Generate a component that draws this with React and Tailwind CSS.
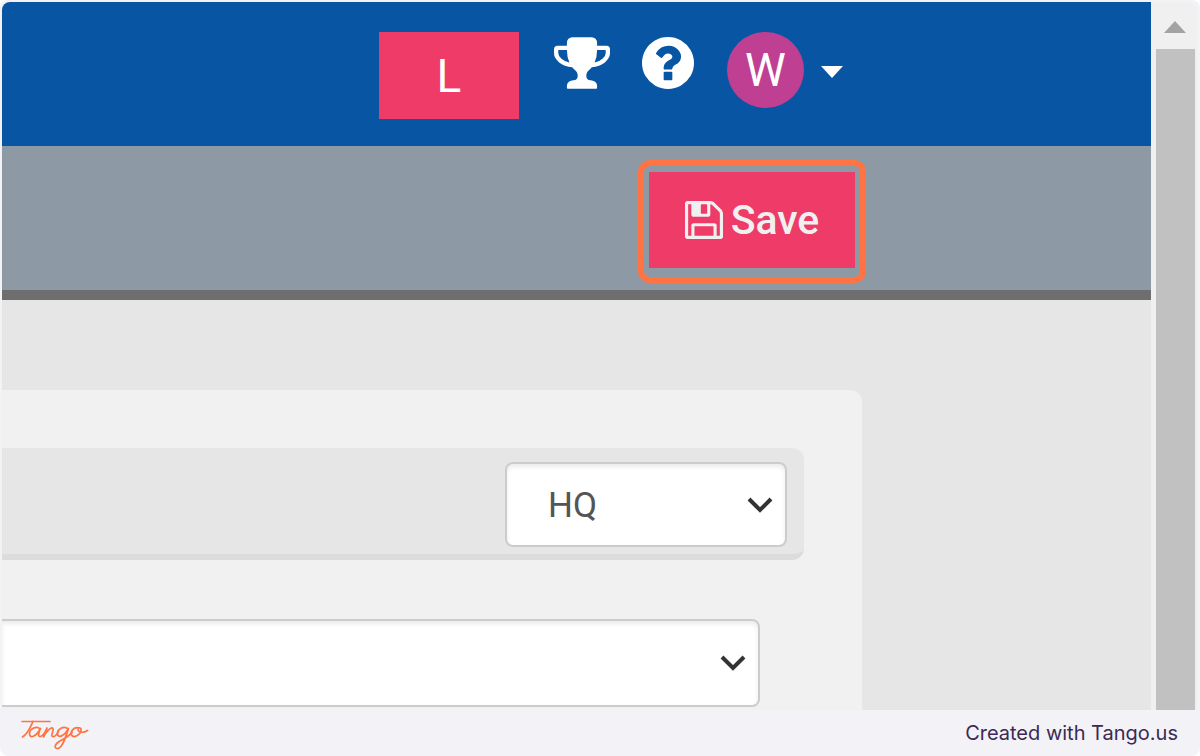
import React, { useState } from 'react';

const TrophyIcon = () => (
  <svg viewBox="64 128 1664 1536" className="h-[52px] w-14" fill="currentColor" aria-hidden="true">
    <path d="M522 883q-74-162-74-371h-256v96q0 78 94.500 162t235.500 113zM1600 608v-96h-256q0 209-74 371 141-29 235.500-113t94.500-162zM1728 480v128q0 71-41.500 143t-112 130-173 97.500-215.500 44.500q-42 54-95 95-38 34-52.500 72.500t-14.500 89.500q0 54 30.500 91t97.500 37q75 0 133.500 45.500t58.500 114.500v64q0 14-9 23t-23 9h-832q-14 0-23-9t-9-23v-64q0-69 58.500-114.500t133.500-45.500q67 0 97.500-37t30.500-91q0-51-14.500-89.500t-52.500-72.500q-53-41-95-95-113-5-215.500-44.500t-173-97.500-112-130-41.500-143v-128q0-40 28-68t68-28h288v-96q0-66 47-113t113-47h576q66 0 113 47t47 113v96h288q40 0 68 28t28 68z" />
  </svg>
);

const HelpIcon = () => (
  <svg viewBox="128 128 1536 1536" className="size-[52px]" fill="currentColor" aria-hidden="true">
    <path d="M1024 1376v-192q0-14-9-23t-23-9h-192q-14 0-23 9t-9 23v192q0 14 9 23t23 9h192q14 0 23-9t9-23zM1280 704q0-88-55.500-163t-138.500-116-170-41q-243 0-371 213-15 24 8 42l132 100q7 6 19 6 16 0 25-12 53-68 86-92 34-24 86-24 48 0 85.500 26t37.500 59q0 38-20 61t-68 45q-63 28-115.500 86.500t-52.500 125.500v36q0 14 9 23t23 9h192q14 0 23-9t9-23q0-19 21.500-49.500t54.500-49.500q32-18 49-28.500t46-35 44.500-48 28-60.500 12.500-81zM1664 896q0 209-103 385.500t-279.500 279.500-385.500 103-385.500-103-279.500-279.500-103-385.500 103-385.500 279.500-279.500 385.500-103 385.500 103 279.500 279.500 103 385.500z" />
  </svg>
);

const FloppyIcon = () => (
  <svg viewBox="0 0 1536 1536" className="size-[38px]" fill="currentColor" aria-hidden="true">
    <path d="M384 1408h768v-384h-768v384zM1280 1408h128v-896q0-14-10-38.500t-20-34.500l-281-281q-10-10-34-20t-39-10v416q0 40-28 68t-68 28h-576q-40 0-68-28t-28-68v-416h-128v1280h128v-416q0-40 28-68t68-28h832q40 0 68 28t28 68v416zM896 480v-320q0-13-9.500-22.500t-22.500-9.500h-192q-13 0-22.500 9.500t-9.500 22.500v320q0 13 9.500 22.500t22.500 9.500h192q13 0 22.500-9.500t9.500-22.500zM1536 512v928q0 40-28 68t-68 28h-1344q-40 0-68-28t-28-68v-1344q0-40 28-68t68-28h928q40 0 88 20t76 48l280 280q28 28 48 76t20 88z" />
  </svg>
);

const Chevron = () => (
  <svg
    viewBox="0 0 26 16"
    className="pointer-events-none absolute right-3.5 top-1/2 h-4 w-[26px] -translate-y-1/2"
    fill="none"
    stroke="#333"
    strokeWidth="4"
    aria-hidden="true"
  >
    <path d="M2 2 L13 13 L24 2" />
  </svg>
);

const TangoLogo = () => (
  <svg
    viewBox="0 0 70 32"
    className="h-8 w-[70px]"
    fill="none"
    stroke="#ff7442"
    strokeWidth="1.700"
    strokeLinecap="round"
    strokeLinejoin="round"
    role="img"
    aria-label="Tango"
  >
    <path d="M2 2.500H30" />
    <path d="M13 2.500C10 9 8 15 2.500 18" />
    <path d="M20 10C17 6 9.500 10 9.500 14.500C9.500 20 16 18 20.500 9.500C18 15 18 18 20.500 17.500C24 16.500 25.500 12 27 9C26 12 24.500 15 23.500 18C26 13 30.500 8 32.500 9C35 10.500 30 16.500 32.500 17.500C35 18 37 15.500 38.500 12" />
    <path d="M48 10C44.500 6 37.500 10 37.500 14.500C37.500 20 44.500 17 48.500 9.500C46 17 42.500 29 38 29.500C33.500 30 34.500 25 40 22C45.500 19 49 17.500 52 13" />
    <path d="M59 9C54 7.500 50 12.500 51.500 16C53.500 19.500 60.500 16 61 11.500C61.500 8 57.500 8 58 10.500C58.500 14 64 14 67.500 11.500" />
  </svg>
);

const TopBar = () => (
  <header className="flex h-36 items-start justify-end bg-[#0855a3] pr-[307px] pt-[30px] text-white">
    <button type="button" className="h-[87px] w-[140px] bg-[#ee3b67] text-[46px] leading-none">
      L
    </button>
    <button type="button" aria-label="Achievements" className="ml-[35px] mt-[5px]">
      <TrophyIcon />
    </button>
    <button type="button" aria-label="Help" className="ml-8 mt-[5px]">
      <HelpIcon />
    </button>
    <button type="button" aria-label="Account W" className="ml-[33px] flex items-center gap-4">
      <span className="flex h-[76px] w-[77px] items-center justify-center rounded-full bg-[#bf3f92] text-[46px] leading-none">
        W
      </span>
      <svg viewBox="0 0 24 12" className="mt-1 h-3 w-6" fill="currentColor" aria-hidden="true">
        <path d="M1 0H23L12 12Z" />
      </svg>
    </button>
  </header>
);

const ActionBar = () => (
  <div className="flex justify-end border-b-[10px] border-[#6e6e6e] bg-[#8d99a5] pb-[7px] pr-[285px] pt-3.5">
    <div className="rounded-xl border-[6px] border-[#ff7442] px-[5px] pb-[9px] pt-1.5">
      <button
        type="button"
        className="flex h-24 w-[206px] items-center justify-center gap-2 bg-[#ee3b67] text-[41px] font-medium leading-none text-[#f0f0f0]"
      >
        <FloppyIcon />
        Save
      </button>
    </div>
  </div>
);

const Settings = () => {
  const [office, setOffice] = useState('HQ');

  return (
    <main className="flex flex-1 bg-[#e6e6e6] pr-[289px] pt-[90px]">
      <div className="flex-1 rounded-tr-xl bg-[#f1f1f1] pb-[3px] pt-[58px]">
        <div className="mr-[58px] flex justify-end rounded-r-xl border-b-[6px] border-[#dcdcdc] bg-[#e6e6e6] pb-[7px] pr-[17px] pt-3.5">
          <div className="relative">
            <select
              aria-label="Office"
              value={office}
              onChange={(e) => setOffice(e.target.value)}
              className="block h-[85px] w-[282px] appearance-none rounded-lg border-2 border-[#ccc] bg-white pl-[41px] pt-1 text-[35px] text-[#555] shadow-[inset_0_3px_4px_rgba(0,0,0,0.08)]"
            >
              <option>HQ</option>
            </select>
            <Chevron />
          </div>
        </div>

        <div className="relative mr-[102px] mt-[59px]">
          <select
            aria-label="Details"
            className="block h-[88px] w-full appearance-none rounded-r-lg border-2 border-l-0 border-[#ccc] bg-white text-[35px] shadow-[inset_0_3px_4px_rgba(0,0,0,0.08)]"
          >
            <option></option>
          </select>
          <Chevron />
        </div>
      </div>
    </main>
  );
};

const Scrollbar = () => (
  <div className="flex w-[46px] flex-col items-center rounded-tr-lg bg-[#f0f0f0] pl-0.5 pt-[19px]" aria-hidden="true">
    <svg viewBox="0 0 22 12" className="h-3 w-[22px]" fill="#a3a3a3">
      <path d="M0 12H22L11 0Z" />
    </svg>
    <div className="mt-4 w-[39px] flex-1 bg-[#c1c1c1]"></div>
  </div>
);

const App = () => {
  return (
    <div className="bg-white font-['Roboto',sans-serif]">
      <div className="flex min-h-screen flex-col overflow-hidden rounded-lg bg-[#f3f2f7]">
        <div className="flex flex-1 overflow-hidden pl-0.5 pr-[3px] pt-0.5">
          <div className="flex flex-1 flex-col overflow-hidden rounded-tl-lg">
            <TopBar />
            <ActionBar />
            <Settings />
          </div>
          <Scrollbar />
        </div>
        <footer className="flex h-[46px] items-center justify-between pl-5 pr-[22px]">
          <a href="#tango" className="mt-1">
            <TangoLogo />
          </a>
          <p className="font-['Inter',sans-serif] text-xl leading-none text-[#3b2a54]">
            Created with Tango.us
          </p>
        </footer>
      </div>
    </div>
  );
};

export default App;
